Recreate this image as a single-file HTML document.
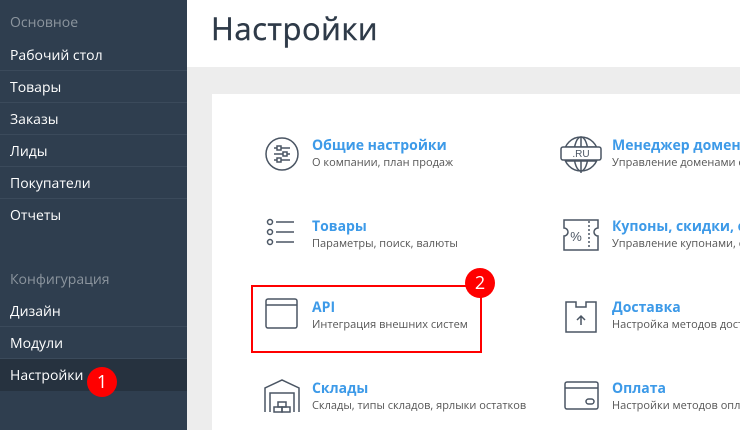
<!DOCTYPE html><html><head><meta charset="utf-8"><style>
*{margin:0;padding:0;box-sizing:border-box}
html,body{width:740px;height:430px;overflow:hidden}
body{position:relative;font-family:"Open Sans","Liberation Sans","DejaVu Sans",sans-serif;background:#ededed}
.sb{position:absolute;left:0;top:0;width:187px;height:430px;background:#2f3e4f}
.h{position:absolute;left:10px;color:#8c959e;font-size:14px}
.it{position:absolute;left:0;width:187px;height:32px;line-height:33px;padding-left:10px;color:#fff;font-size:14px;border-bottom:1px solid #3b4a5b}
.top{position:absolute;left:187px;top:0;width:553px;height:67px;background:#fff}
.top h1{position:absolute;left:24px;top:8px;font-size:31px;font-weight:normal;color:#2e3a48;letter-spacing:.5px;-webkit-text-stroke:.4px #2e3a48}
.card{position:absolute;left:212px;top:94px;width:528px;height:336px;background:#fff}
.t{position:absolute;color:#3d9ae8;font-weight:bold;font-size:14px;white-space:nowrap}
.s{position:absolute;color:#555;font-size:11px;white-space:nowrap}
.ic{position:absolute}
.badge{position:absolute;width:30px;height:30px;border-radius:50%;background:#f00;color:#fff;font-size:18px;text-align:center;line-height:30px}
.clip{position:absolute;left:0;top:0;width:740px;height:430px;overflow:hidden}
</style></head><body><div class="clip">
<div class="sb">
<div class="h" style="top:13px">Основное</div>
<div class="it" style="top:39px">Рабочий стол</div>
<div class="it" style="top:71px">Товары</div>
<div class="it" style="top:103px">Заказы</div>
<div class="it" style="top:135px">Лиды</div>
<div class="it" style="top:167px">Покупатели</div>
<div class="it" style="top:199px;border:none">Отчеты</div>
<div class="h" style="top:270px">Конфигурация</div>
<div class="it" style="top:295px">Дизайн</div>
<div class="it" style="top:327px">Модули</div>
<div class="it" style="top:359px;background:#26323f;border:none">Настройки</div>
</div>
<div class="badge" style="left:87px;top:367px">1</div>
<div class="top"><h1>Настройки</h1></div>
<div class="card"></div>
<svg class="ic" style="left:264px;top:136px" width="36" height="36" fill="none" stroke="#4a5563" stroke-width="1.5"><circle cx="18" cy="18" r="16"/><path d="M10 12h16M10 18h16M10 24h16"/><rect x="13" y="10" width="4" height="4" fill="#fff"/><rect x="19" y="16" width="4" height="4" fill="#fff"/><rect x="13" y="22" width="4" height="4" fill="#fff"/></svg>
<div class="t" style="left:312px;top:136px">Общие настройки</div>
<div class="s" style="left:312px;top:155px">О компании, план продаж</div>
<svg class="ic" style="left:266px;top:218px" width="34" height="32" fill="none" stroke="#4a5563" stroke-width="1.5"><circle cx="4" cy="4" r="2.5"/><circle cx="4" cy="14" r="2.5"/><circle cx="4" cy="24" r="2.5"/><path d="M10 4h18M10 14h18M10 24h18"/></svg>
<div class="t" style="left:312px;top:217px">Товары</div>
<div class="s" style="left:312px;top:236px">Параметры, поиск, валюты</div>
<div style="position:absolute;left:251px;top:285px;width:231px;height:68px;border:2px solid #f00"></div>
<svg class="ic" style="left:265px;top:298px" width="34" height="32" fill="none" stroke="#4a5563" stroke-width="1.5"><rect x="1" y="1" width="31" height="29" rx="2"/><path d="M1 7h31"/></svg>
<div class="t" style="left:312px;top:298px">API</div>
<div class="s" style="left:312px;top:317px">Интеграция внешних систем</div>
<div class="badge" style="left:465px;top:268px">2</div>
<svg class="ic" style="left:263px;top:378px" width="38" height="36" fill="none" stroke="#4a5563" stroke-width="1.5"><path d="M2 34V10L19 2l17 8v24M7 34V15h24v19"/><rect x="15" y="24" width="8" height="5"/><rect x="11" y="29" width="8" height="5"/><rect x="19" y="29" width="8" height="5"/></svg>
<div class="t" style="left:312px;top:379px">Склады</div>
<div class="s" style="left:312px;top:398px">Склады, типы складов, ярлыки остатков</div>
<svg class="ic" style="left:559px;top:135px" width="44" height="38" fill="none" stroke="#4a5563" stroke-width="1.5"><circle cx="22" cy="19" r="17"/><ellipse cx="22" cy="19" rx="7" ry="17"/><path d="M22 2v36M6 12h32M6 26h32"/><rect x="2" y="12" width="40" height="13" rx="2" fill="#fff"/><text x="22" y="22" font-size="10" fill="#4a5563" stroke="none" text-anchor="middle" font-family="Liberation Sans">.RU</text></svg>
<div class="t" style="left:612px;top:136px">Менеджер доменов</div>
<div class="s" style="left:612px;top:155px">Управление доменами сайта</div>
<svg class="ic" style="left:563px;top:219px" width="36" height="32" fill="none" stroke="#4a5563" stroke-width="1.5"><path d="M1 1h34v8a4 4 0 0 0 0 8v14H1V17a4 4 0 0 0 0-8z"/><path d="M26 2v28" stroke-dasharray="2 2"/><text x="13" y="22" font-size="13" fill="#4a5563" stroke="none" text-anchor="middle" font-family="Liberation Sans">%</text></svg>
<div class="t" style="left:612px;top:217px">Купоны, скидки, сертификаты</div>
<div class="s" style="left:612px;top:236px">Управление купонами, скидками</div>
<svg class="ic" style="left:565px;top:301px" width="34" height="32" fill="none" stroke="#4a5563" stroke-width="1.5"><path d="M1 1h10v5h10V1h10v30H1z"/><path d="M16 24v-8M12 19l4-4 4 4"/></svg>
<div class="t" style="left:612px;top:298px">Доставка</div>
<div class="s" style="left:612px;top:317px">Настройка методов доставки</div>
<svg class="ic" style="left:564px;top:381px" width="36" height="30" fill="none" stroke="#4a5563" stroke-width="1.5"><rect x="1" y="1" width="33" height="27" rx="2"/><path d="M1 7h33"/><rect x="22" y="18" width="8" height="5" rx="2.5"/></svg>
<div class="t" style="left:612px;top:379px">Оплата</div>
<div class="s" style="left:612px;top:398px">Настройки методов оплаты</div>
</div></body></html>
